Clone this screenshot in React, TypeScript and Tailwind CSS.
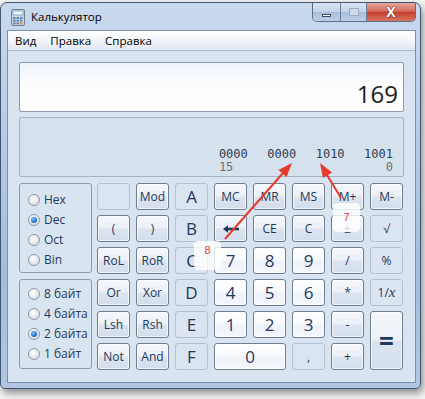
import React from 'react';

type Kind = 'op' | 'num' | 'dis';

interface Key {
  label: React.ReactNode;
  kind: Kind;
  span?: string;
  big?: boolean;
}

const BackArrow = () => (
  <svg width="18" height="10" viewBox="0 0 18 10">
    <path d="M17 5H4" stroke="#1e395b" strokeWidth="2.6" />
    <path d="M1 5L6 1.2V8.8Z" fill="#1e395b" />
  </svg>
);

const keys: Key[] = [
  { label: '', kind: 'dis' },
  { label: 'Mod', kind: 'op' },
  { label: 'A', kind: 'dis', big: true },
  { label: 'MC', kind: 'op' },
  { label: 'MR', kind: 'op' },
  { label: 'MS', kind: 'op' },
  { label: 'M+', kind: 'op' },
  { label: 'M-', kind: 'op' },

  { label: '(', kind: 'op' },
  { label: ')', kind: 'op' },
  { label: 'B', kind: 'dis', big: true },
  { label: <BackArrow />, kind: 'op' },
  { label: 'CE', kind: 'op' },
  { label: 'C', kind: 'op' },
  { label: '±', kind: 'op' },
  { label: '√', kind: 'dis' },

  { label: 'RoL', kind: 'op' },
  { label: 'RoR', kind: 'op' },
  { label: 'C', kind: 'dis', big: true },
  { label: '7', kind: 'num' },
  { label: '8', kind: 'num' },
  { label: '9', kind: 'num' },
  { label: '/', kind: 'op' },
  { label: '%', kind: 'dis' },

  { label: 'Or', kind: 'op' },
  { label: 'Xor', kind: 'op' },
  { label: 'D', kind: 'dis', big: true },
  { label: '4', kind: 'num' },
  { label: '5', kind: 'num' },
  { label: '6', kind: 'num' },
  { label: '*', kind: 'op' },
  {
    label: (
      <span>
        1/<span className="font-['Liberation_Serif'] italic text-[15px]">x</span>
      </span>
    ),
    kind: 'dis',
  },

  { label: 'Lsh', kind: 'op' },
  { label: 'Rsh', kind: 'op' },
  { label: 'E', kind: 'dis', big: true },
  { label: '1', kind: 'num' },
  { label: '2', kind: 'num' },
  { label: '3', kind: 'num' },
  { label: '-', kind: 'op' },
  { label: '=', kind: 'op', span: 'row-span-2' },

  { label: 'Not', kind: 'op' },
  { label: 'And', kind: 'op' },
  { label: 'F', kind: 'dis', big: true },
  { label: '0', kind: 'num', span: 'col-span-2' },
  { label: ',', kind: 'dis' },
  { label: '+', kind: 'op' },
];

const kindClass: Record<Kind, string> = {
  op: 'border-[#707d90] bg-[linear-gradient(to_bottom,#f4f7fb_0%,#ecf1f8_48%,#dbe4f0_52%,#d4deeb_100%)] shadow-[inset_0_0_0_1px_rgba(255,255,255,0.7)] text-[12px]',
  num: 'border-[#707d90] bg-[linear-gradient(to_bottom,#ffffff_0%,#f8fafd_45%,#edf2f9_55%,#f4f7fb_100%)] shadow-[inset_0_0_0_1px_rgba(255,255,255,0.9)] text-[17px]',
  dis: 'border-[#b3c0d1] bg-[#dbe5f1] text-[12px]',
};

const Radio = ({ label, checked }: { label: string; checked?: boolean }) => (
  <div className="h-[20px] flex items-center gap-[4px]">
    <div className="w-[12px] h-[12px] rounded-full border border-[#8e99a8] bg-[radial-gradient(circle_at_40%_35%,#ffffff_0%,#e6e8eb_55%,#c9ced5_100%)] flex items-center justify-center">
      {checked && (
        <div className="w-[6px] h-[6px] rounded-full bg-[radial-gradient(circle_at_40%_35%,#8fc8f7_0%,#2a7bd0_50%,#13427e_100%)]" />
      )}
    </div>
    <span className="text-[12px] text-[#1e395b] leading-none">{label}</span>
  </div>
);

const CalcIcon = () => (
  <svg width="16" height="17" viewBox="0 0 16 17">
    <rect x="1.5" y="0.5" width="13" height="16" rx="1.5" fill="#c9d6e3" stroke="#6e8194" />
    <rect x="3" y="2" width="10" height="4" fill="#eaf6fb" stroke="#7ea3c0" strokeWidth="0.8" />
    {[0, 1, 2].map((r) =>
      [0, 1, 2].map((c) => (
        <rect key={`${r}-${c}`} x={3 + c * 3.5} y={8 + r * 2.7} width="2.6" height="1.9" fill={c === 2 && r === 2 ? '#e08a3c' : '#5e86b0'} />
      ))
    )}
  </svg>
);

export default function App() {
  return (
    <div className="relative w-[425px] h-[399px] overflow-hidden bg-[#f4f5f7] font-['Open_Sans',sans-serif]">
      <div className="mt-[2px] w-[421px] h-[387px] rounded-t-[7px] rounded-b-[5px] border border-[#43566f] bg-[linear-gradient(to_bottom,#c9d9ee_0%,#b9cde7_30%,#a3bcdf_70%,#b0c6e3_100%)] shadow-[2px_4px_8px_rgba(0,0,0,0.45)] flex flex-col">
        {/* title bar */}
        <div className="h-[27px] flex items-start pl-[9px] pr-[4px]">
          <div className="mt-[6px]">
            <CalcIcon />
          </div>
          <span className="mt-[6px] ml-[5px] text-[11.5px] leading-[16px] text-black">Калькулятор</span>
          <div className="ml-auto flex h-[19px] rounded-b-[5px] border border-t-0 border-[#5b6f8c] overflow-hidden">
            <div className="w-[28px] flex items-center justify-center border-r border-[#6b7f9c] bg-[linear-gradient(to_bottom,#dce6f3_0%,#c3d3e8_50%,#a9bfdc_52%,#bccfe6_100%)]">
              <div className="w-[9px] h-[3px] mt-[6px] bg-white border border-[#3d4b5e]" />
            </div>
            <div className="w-[26px] flex items-center justify-center border-r border-[#6b7f9c] bg-[linear-gradient(to_bottom,#dce6f3_0%,#c3d3e8_50%,#a9bfdc_52%,#bccfe6_100%)]">
              <div className="w-[10px] h-[8px] border border-[#9aaac0] bg-[#cfdbeb]" />
            </div>
            <div className="w-[48px] flex items-center justify-center bg-[linear-gradient(to_bottom,#e8a79c_0%,#d46c5d_45%,#c2402f_52%,#d8735f_100%)]">
              <span className="text-[14px] font-bold leading-none text-white [text-shadow:0_0_1px_#3a1010,0_0_1px_#3a1010]">X</span>
            </div>
          </div>
        </div>

        {/* client area */}
        <div className="ml-[6px] mr-[4px] mb-[5px] flex-1 border border-[#7c90ab] bg-[#d9e4f1] flex flex-col">
          <div className="h-[20px] border-b border-[#a9b7c9] bg-[linear-gradient(to_bottom,#ffffff_0%,#f2f5fa_50%,#e1e8f2_100%)] flex items-center gap-[14px] pl-[7px] text-[11.5px] text-black">
            <span>Вид</span>
            <span>Правка</span>
            <span>Справка</span>
          </div>

          <div className="px-[11px] pt-[11px] flex flex-col">
            <div className="h-[50px] rounded-[2px] border border-[#8e9bae] bg-[linear-gradient(to_bottom,#eef3fa_0%,#fbfcfe_40%,#ffffff_100%)] flex items-end justify-end pr-[5px] pb-[1px]">
              <span className="text-[24px] leading-[32px] text-[#1a1a1a]">169</span>
            </div>

            <div className="mt-[5px] h-[60px] rounded-[2px] border border-[#a3b2c6] bg-[#d6e1ee] flex items-end justify-end pr-[10px] pb-[2px]">
              <div className="flex flex-col font-['DejaVu_Sans_Mono',monospace] text-[12px] leading-[13px]">
                <div className="flex gap-[19.5px] text-[#2c3d55]">
                  <span>0000</span>
                  <span>0000</span>
                  <span>1010</span>
                  <span>1001</span>
                </div>
                <div className="flex justify-between text-[#6f6f6f]">
                  <span>15</span>
                  <span>0</span>
                </div>
              </div>
            </div>

            <div className="mt-[6px] flex gap-[5px]">
              <div className="w-[73px] flex flex-col gap-[6px]">
                <div className="h-[90px] rounded-[3px] border border-[#8e9bae] flex flex-col pl-[8px] pt-[6px]">
                  <Radio label="Hex" />
                  <Radio label="Dec" checked />
                  <Radio label="Oct" />
                  <Radio label="Bin" />
                </div>
                <div className="h-[90px] rounded-[3px] border border-[#8e9bae] flex flex-col pl-[8px] pt-[4px]">
                  <Radio label="8 байт" />
                  <Radio label="4 байта" />
                  <Radio label="2 байта" checked />
                  <Radio label="1 байт" />
                </div>
              </div>

              <div className="grid grid-cols-[repeat(8,33px)] grid-rows-[repeat(6,27px)] gap-x-[6px] gap-y-[5px]">
                {keys.map((k, i) => (
                  <div
                    key={i}
                    className={`rounded-[3px] border flex items-center justify-center text-[#1e395b] leading-none ${kindClass[k.kind]} ${k.big ? 'text-[17px]' : ''} ${k.span ?? ''}`}
                  >
                    {k.label === '=' ? (
                      <span className="text-[26px] font-bold leading-none">=</span>
                    ) : (
                      k.label
                    )}
                  </div>
                ))}
              </div>
            </div>
          </div>
        </div>
      </div>

      {/* annotation overlay */}
      <svg className="absolute left-0 top-0 pointer-events-none" width="425" height="399">
        <line x1="225" y1="239" x2="283" y2="173" stroke="#e53a2c" strokeWidth="2" />
        <polygon points="292,163 286.5,177 278.5,170" fill="#e53a2c" />
        <line x1="341" y1="198" x2="327" y2="175" stroke="#e53a2c" strokeWidth="2" />
        <polygon points="320,163 332,172.5 323,178" fill="#e53a2c" />
      </svg>
      <div className="absolute left-[194px] top-[241px] w-[27px] h-[29px] rounded-[4px] bg-white/80 flex justify-center pt-[4px] text-[11px] leading-none text-[#e53a2c] font-['Liberation_Sans',sans-serif]">
        8
      </div>
      <div className="absolute left-[333px] top-[203px] w-[27px] h-[29px] rounded-[4px] bg-white/80 flex justify-center pt-[9px] text-[11px] leading-none text-[#e53a2c] font-['Liberation_Sans',sans-serif]">
        7
      </div>
    </div>
  );
}
